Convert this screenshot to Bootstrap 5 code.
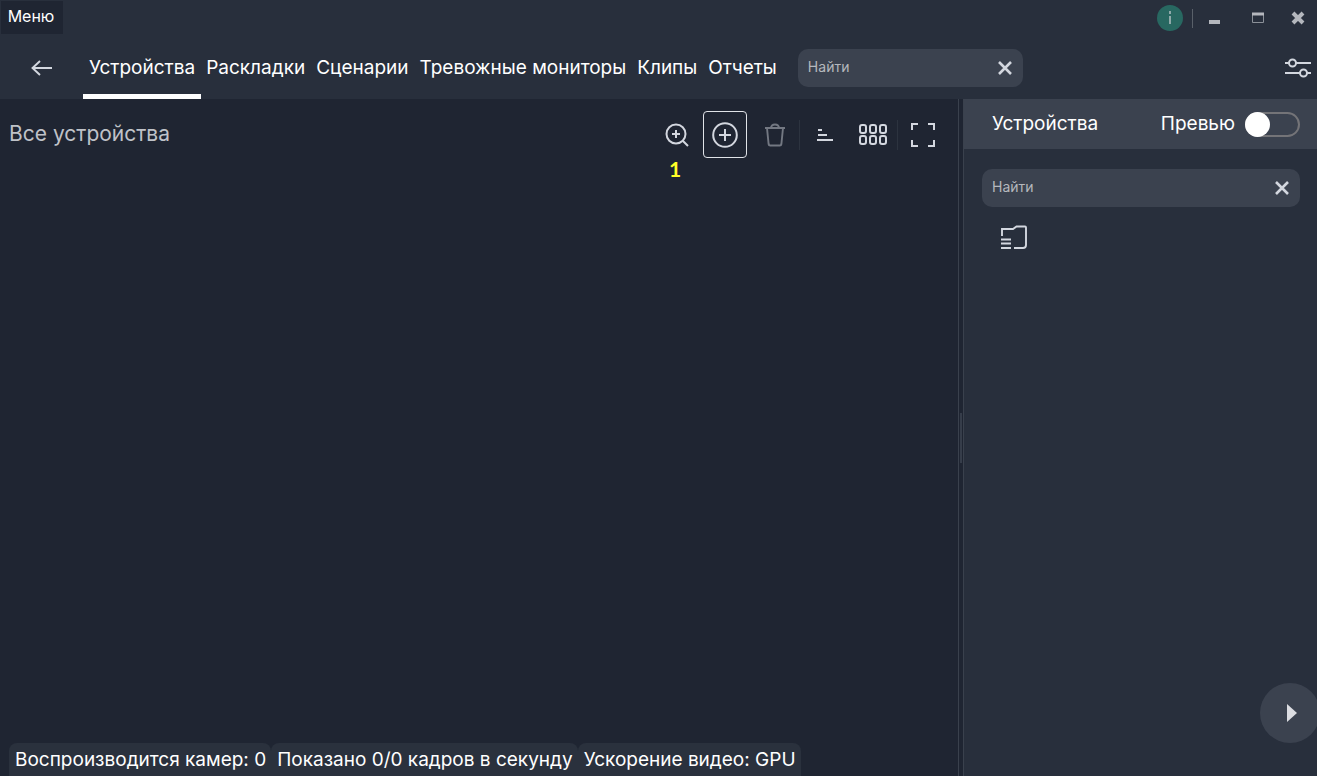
<!DOCTYPE html>
<html lang="ru" data-bs-theme="dark">
<head>
<meta charset="utf-8">
<meta name="viewport" content="width=device-width, initial-scale=1">
<title>Устройства</title>
<link href="https://cdn.jsdelivr.net/npm/bootstrap@5.3.0/dist/css/bootstrap.min.css" rel="stylesheet">
<style>
:root { --deep: #1f2532; --panel: #282f3c; --raised: #3b424f; --line: #3a414d; --ink: #d3d7df; }
body { font-family: "Inter", "Liberation Sans", sans-serif; font-size: 19px; line-height: 24px; color: #fff; background: var(--deep); }
svg { display: block; fill: none; stroke: currentColor; flex: none; }
.tool { display: flex; flex: none; align-items: center; justify-content: center; padding: 0; border: 0; background: none; color: var(--ink); }
.titlebar { height: 36px; padding-left: 1px; background: var(--panel); }
.menu-btn { height: 33px; width: 62px; margin-top: 1px; padding: 0 2px 3px 0; background: var(--deep); color: #fff; font-size: 16px; }
.info-btn { width: 26px; height: 26px; border-radius: 50%; background: #286861; color: #8fa9a9; margin-right: 9px; }
.win-rule { width: 1px; height: 19px; background: #596069; }
.win-btn { width: 43px; height: 36px; color: #b4b7bd; }
.win-btn:last-child { width: 38px; }
.topnav { height: 63px; background: var(--panel); }
.back-btn { width: 83px; height: 63px; }
.tab-link { display: block; height: 63px; padding: 20px 6px 0; color: #fff; text-decoration: none; white-space: nowrap; }
.tab-link + .tab-link { padding-left: 5px; }
.tab-link.active { border-bottom: 5px solid #fff; }
.search-box { height: 38px; border-radius: 10px; background: var(--raised); }
.search-box input { min-width: 0; border: 0; outline: 0; padding: 0 0 2px 10px; background: none; color: #b5b8bd; font-size: 14px; }
.search-box input::placeholder { color: #b5b8bd; opacity: 1; }
.search-box .tool { width: 36px; height: 38px; }
.top-search { width: 225px; margin-left: 15px; }
.settings-btn { width: 38px; height: 63px; }
.workspace { border-right: 1px solid var(--line); }
.view-title { font-size: 21px; line-height: 28px; color: #bfc2c8; margin: 0; padding: 21px 0 0 9px; font-weight: 400; }
.toolbar { padding: 12px 13px 0 0; }
.toolbar .tool { width: 44px; height: 47px; }
.toolbar .tool.boxed { margin-right: 6px; border: 1px solid #e0e3e8; border-radius: 4px; }
.toolbar .tool:disabled { color: #737882; }
.tool-rule { width: 1px; height: 30px; margin: 0 3px 0 2px; background: #2c333f; }
.callout-mark { top: 46px; left: 14px; font: bold 21px/24px "Lato", sans-serif; color: #ffff28; }
.status-bar { padding-left: 9px; }
.status-chip { height: 33px; padding: 5px 5px 0 6px; border-radius: 8px 8px 0 0; background: #2a313d; white-space: nowrap; }
.splitter { width: 4px; background: var(--deep); padding-left: 1px; }
.splitter span { width: 2px; height: 50px; background: #363d4a; }
.side { width: 354px; background: var(--panel); border-left: 1px solid var(--line); }
.side-head { height: 50px; padding: 0 17px 0 28px; background: var(--raised); }
.side-search { margin: 20px 17px 0 18px; }
.preview-switch { appearance: none; width: 55px; height: 25px; margin: 0 0 0 10px; border-radius: 13px; border: 2px solid #747478; background: none; position: relative; }
.preview-switch::before { content: ""; position: absolute; top: -2px; left: -2px; width: 25px; height: 25px; border-radius: 50%; background: #fff; }
.preview-switch:checked { background: #286861; }
.preview-switch:checked::before { left: 28px; }
.folder-btn { margin: 18px 0 0 36px; width: 28px; height: 26px; }
.expand-btn { right: -3px; bottom: 33px; width: 60px; height: 60px; border-radius: 50%; background: var(--raised); }
</style>
</head>
<body>
<div class="d-flex flex-column vh-100 overflow-hidden">
  <header>
    <div class="titlebar d-flex align-items-start">
      <button class="tool menu-btn" type="button">Меню</button>
      <div class="d-flex align-items-center ms-auto h-100">
        <button class="tool info-btn" type="button" aria-label="Информация"><svg width="6" height="14" viewBox="0 0 6 14"><path d="M3 0v3M3 5v8" stroke-width="2"/></svg></button>
        <span class="win-rule"></span>
        <button class="tool win-btn" type="button" aria-label="Свернуть"><svg width="12" height="14" viewBox="0 0 12 14"><path d="M0 11h11" stroke-width="4"/></svg></button>
        <button class="tool win-btn" type="button" aria-label="Развернуть"><svg width="12" height="12" viewBox="0 0 12 12"><path d="M.5 1v9.500h11V1" stroke="#8b9098"/><path d="M0 2h12" stroke-width="3"/></svg></button>
        <button class="tool win-btn" type="button" aria-label="Закрыть"><svg width="14" height="14" viewBox="0 0 14 14"><path d="M2 2l10 10M12 2L2 12" stroke-width="4"/></svg></button>
      </div>
    </div>
    <div class="topnav d-flex align-items-center">
      <button class="tool back-btn" type="button" aria-label="Назад"><svg width="22" height="18" viewBox="0 0 22 18"><path d="M21 9H1.500M9 2L1.500 9 9 16" stroke-width="1.900"/></svg></button>
      <nav class="d-flex">
        <a class="tab-link active" href="#" aria-current="page">Устройства</a>
        <a class="tab-link" href="#">Раскладки</a>
        <a class="tab-link" href="#">Сценарии</a>
        <a class="tab-link" href="#">Тревожные мониторы</a>
        <a class="tab-link" href="#">Клипы</a>
        <a class="tab-link" href="#">Отчеты</a>
      </nav>
      <div class="search-box top-search d-flex">
        <input class="flex-grow-1" type="text" placeholder="Найти" aria-label="Найти">
        <button class="tool" type="button" aria-label="Очистить"><svg width="14" height="14" viewBox="0 0 14 14"><path d="M1 1l12 12M13 1L1 13" stroke-width="2.600"/></svg></button>
      </div>
      <button class="tool settings-btn ms-auto" type="button" aria-label="Настройки"><svg width="26" height="20" viewBox="0 0 26 20"><g stroke-width="2"><path d="M0 5h4M11 5h15M0 15h15M22 15h4"/><circle cx="7.500" cy="5" r="3.500"/><circle cx="18.500" cy="15" r="3.500"/></g></svg></button>
    </div>
  </header>
  <div class="d-flex flex-grow-1">
    <main class="workspace d-flex flex-column flex-grow-1">
      <div class="d-flex justify-content-between">
        <h1 class="view-title">Все устройства</h1>
        <div class="toolbar d-flex align-items-center align-self-start">
          <div class="position-relative me-1">
            <button class="tool" type="button" aria-label="Увеличить"><svg width="24" height="24" viewBox="0 0 24 24" stroke-width="2"><circle cx="11" cy="11" r="9.500"/><path d="M18 18l5 5M11 7v8M7 11h8"/></svg></button>
            <span class="callout-mark position-absolute">1</span>
          </div>
          <button class="tool boxed" type="button" aria-label="Добавить"><svg width="26" height="26" viewBox="0 0 26 26" stroke-width="2"><circle cx="13" cy="13" r="11.800"/><path d="M13 7v12M7 13h12"/></svg></button>
          <button class="tool" type="button" aria-label="Удалить" disabled><svg width="22" height="24" viewBox="0 0 22 24" stroke-width="1.900"><path d="M1 5h20M3 5l1.600 16q.2 1.500 1.600 1.500h9.600q1.400 0 1.600-1.500L19 5M7 5q0-3.500 4-3.500t4 3.500"/></svg></button>
          <span class="tool-rule"></span>
          <button class="tool" type="button" aria-label="Сортировать"><svg width="16" height="14" viewBox="0 0 16 14" stroke-width="2"><path d="M1 2h4M1 7h9M0 12h16"/></svg></button>
          <button class="tool ms-1" type="button" aria-label="Сетка"><svg width="28" height="22" viewBox="0 0 28 22" stroke-width="2"><rect x="1" y="1" width="6" height="8" rx="2"/><rect x="11" y="1" width="6" height="8" rx="2"/><rect x="21" y="1" width="6" height="8" rx="2"/><rect x="1" y="12" width="6" height="8" rx="2"/><rect x="11" y="12" width="6" height="8" rx="2"/><rect x="21" y="12" width="6" height="8" rx="2"/></svg></button>
          <span class="tool-rule"></span>
          <button class="tool" type="button" aria-label="Во весь экран"><svg width="24" height="24" viewBox="0 0 24 24" stroke-width="2"><path d="M1 7V1h6M17 1h6v6M23 17v6h-6M7 23H1v-6"/></svg></button>
        </div>
      </div>
      <footer class="status-bar d-flex mt-auto">
        <span class="status-chip">Воспроизводится камер: 0</span>
        <span class="status-chip">Показано 0/0 кадров в секунду</span>
        <span class="status-chip">Ускорение видео: GPU</span>
      </footer>
    </main>
    <div class="splitter d-flex align-items-center"><span></span></div>
    <aside class="side position-relative flex-shrink-0">
      <div class="side-head d-flex align-items-center justify-content-between">
        <span>Устройства</span>
        <div class="d-flex align-items-center">
          <label for="preview">Превью</label>
          <input class="preview-switch" type="checkbox" role="switch" id="preview">
        </div>
      </div>
      <div class="search-box side-search d-flex">
        <input class="flex-grow-1" type="text" placeholder="Найти" aria-label="Найти устройство">
        <button class="tool" type="button" aria-label="Очистить"><svg width="14" height="14" viewBox="0 0 14 14"><path d="M1 1l12 12M13 1L1 13" stroke-width="2.600"/></svg></button>
      </div>
      <button class="tool folder-btn" type="button" aria-label="Группа"><svg width="28" height="26" viewBox="0 0 28 26" stroke-width="1.900"><path d="M2 11V4h11l3.500-2.500H25q1 0 1 1V20q0 3-3 3H14M1 14.500h10M1 18.500h10M1 23h10"/></svg></button>
      <button class="tool expand-btn position-absolute" type="button" aria-label="Воспроизвести"><svg class="ms-1" width="10" height="20" viewBox="0 0 10 20"><path d="M0 1l10 9-10 9z" fill="#dcdde2" stroke="none"/></svg></button>
    </aside>
  </div>
</div>
<script src="https://cdn.jsdelivr.net/npm/bootstrap@5.3.0/dist/js/bootstrap.bundle.min.js"></script>
</body>
</html>
